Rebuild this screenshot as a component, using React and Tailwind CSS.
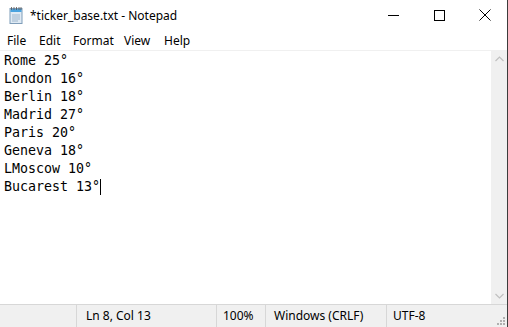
import React from "react";

const lines = [
  "Rome 25°",
  "London 16°",
  "Berlin 18°",
  "Madrid 27°",
  "Paris 20°",
  "Geneva 18°",
  "LMoscow 10°",
  "Bucarest 13°",
];

function NotepadIcon() {
  return (
    <svg width="16" height="18" viewBox="0 0 16 18">
      <rect x="2" y="2.5" width="12" height="15" fill="#dfeaf4" stroke="#7f9db9" strokeWidth="1" />
      <rect x="2.5" y="3" width="11" height="3" fill="#4aa3df" />
      <path d="M4 9h8M4 11h8M4 13h8M4 15h6" stroke="#9fb6cc" strokeWidth="1" />
      <path d="M3.5 1v3M6 1v3M8.5 1v3M11 1v3M13 1v3" stroke="#555" strokeWidth="0.8" />
    </svg>
  );
}

export default function App() {
  const ui = { fontFamily: '"Noto Sans", "Open Sans", Arial, sans-serif' };
  return (
    <div className="w-[508px] h-[327px] overflow-hidden bg-white flex flex-col relative border-r border-[#3c3c3c]" style={ui}>
      {/* Title bar */}
      <div className="h-[30px] flex items-center shrink-0">
        <div className="pl-[8px] pr-[6px] flex items-center"><NotepadIcon /></div>
        <div className="text-[12px] text-black leading-none pt-[1px]">*ticker_base.txt - Notepad</div>
        <div className="flex-1" />
        <div className="w-[46px] h-[30px] flex items-center justify-center">
          <div className="w-[11px] h-px bg-black" />
        </div>
        <div className="w-[46px] h-[30px] flex items-center justify-center">
          <div className="w-[11px] h-[11px] border border-black" />
        </div>
        <div className="w-[45px] h-[30px] flex items-center justify-center">
          <svg width="12" height="12" viewBox="0 0 12 12">
            <path d="M0.5 0.5L11.5 11.5M11.5 0.5L0.5 11.5" stroke="black" strokeWidth="1" />
          </svg>
        </div>
      </div>
      {/* Menu bar */}
      <div className="h-[20px] flex items-center text-[12px] text-black shrink-0 pl-[7px] pt-[2px]">
        <span className="w-[32px]">File</span>
        <span className="w-[34px]">Edit</span>
        <span className="w-[51px]">Format</span>
        <span className="w-[40px]">View</span>
        <span>Help</span>
      </div>
      {/* Editor */}
      <div className="flex-1 flex border-t border-[#f0f0f0] min-h-0">
        <div className="flex-1 pl-[4px] pt-[1px] text-[13.3px] leading-[18px] text-black" style={{ fontFamily: '"DejaVu Sans Mono", "Liberation Mono", monospace' }}>
          {lines.map((l, i) => (
            <div key={i} className="whitespace-pre flex items-center">
              {l}
              {i === lines.length - 1 && <span className="inline-block w-px h-[16px] bg-black" />}
            </div>
          ))}
        </div>
        <div className="w-[16px] bg-[#f0f0f0] flex flex-col items-center justify-between py-[5px]">
          <svg width="9" height="6" viewBox="0 0 9 6"><path d="M0.5 5L4.5 1L8.5 5" stroke="#c0c0c0" fill="none" strokeWidth="1.2" /></svg>
          <svg width="9" height="6" viewBox="0 0 9 6"><path d="M0.5 1L4.5 5L8.5 1" stroke="#c0c0c0" fill="none" strokeWidth="1.2" /></svg>
        </div>
      </div>
      {/* Status bar */}
      <div className="h-[23px] shrink-0 bg-[#f0f0f0] border-t border-[#d7d7d7] flex items-stretch text-[12px] text-black">
        <div className="w-[76px]" />
        <div className="w-[140px] border-l border-[#d7d7d7] pl-[9px] flex items-center">Ln 8, Col 13</div>
        <div className="w-[49px] border-l border-[#d7d7d7] pl-[6px] flex items-center">100%</div>
        <div className="w-[121px] border-l border-[#d7d7d7] pl-[8px] flex items-center">Windows (CRLF)</div>
        <div className="flex-1 border-l border-[#d7d7d7] pl-[6px] flex items-center">UTF-8</div>
        <div className="w-[12px] flex items-end justify-end pb-[2px] pr-[2px]">
          <svg width="8" height="8" viewBox="0 0 8 8" fill="#b0b0b0">
            <rect x="6" y="0" width="2" height="2" /><rect x="3" y="3" width="2" height="2" /><rect x="6" y="3" width="2" height="2" />
            <rect x="0" y="6" width="2" height="2" /><rect x="3" y="6" width="2" height="2" /><rect x="6" y="6" width="2" height="2" />
          </svg>
        </div>
      </div>
    </div>
  );
}
